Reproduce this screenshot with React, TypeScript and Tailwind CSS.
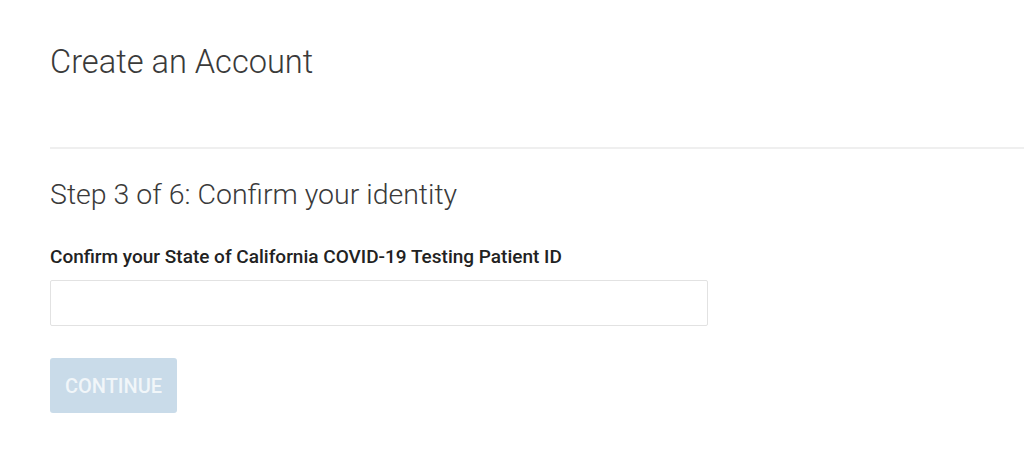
import React from 'react';

const App: React.FC = () => {
    return (
        <div className="min-h-screen bg-white pl-[50px] font-['Roboto',sans-serif] text-[#333]">
            <h1 className="pt-[40px] text-[32.6px] font-light leading-[44px] text-[#3a3a3a]">Create an Account</h1>
            <div className="mt-[63px] h-[2px] bg-[#efefef]" />
            <h2 className="mt-[28px] text-[28.5px] font-light leading-[36px] text-[#3a3a3a]">Step 3 of 6: Confirm your identity</h2>
            <form className="mt-[32px]">
                <label htmlFor="patient-id" className="block text-[19px] font-medium leading-[24px] text-[#222]">
                    Confirm your State of California COVID-19 Testing Patient ID
                </label>
                <input
                    id="patient-id"
                    type="text"
                    className="mt-[11px] block h-[46px] w-[658px] rounded-[2px] border border-[#e2e2e2] px-3 outline-none"
                />
                <button
                    type="button"
                    disabled
                    className="mt-[32px] h-[55px] w-[127px] rounded-[3px] bg-[#c9dbe9] text-[20px] font-medium uppercase text-white/75"
                >
                    Continue
                </button>
            </form>
        </div>
    );
};

export default App;
